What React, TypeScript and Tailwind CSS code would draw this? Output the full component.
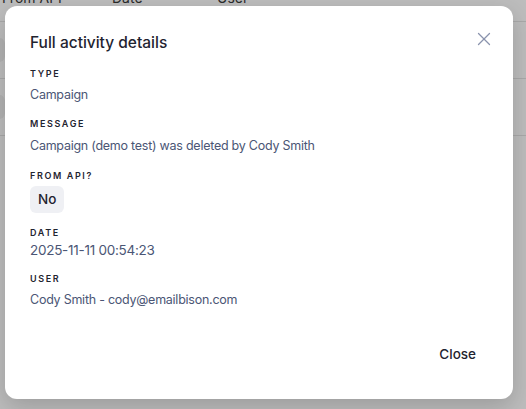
import React from "react";
import { X } from "lucide-react";

const Label: React.FC<{ children: React.ReactNode; className?: string }> = ({ children, className }) => (
  <div className={"text-[9px] leading-[12px] font-semibold tracking-[0.18em] uppercase text-[#1f2430] " + (className ?? "")}>
    {children}
  </div>
);

const Value: React.FC<{ children: React.ReactNode; className?: string }> = ({ children, className }) => (
  <div className={"text-[12.5px] leading-[18px] tracking-[-0.02em] text-[#4b5675] " + (className ?? "")}>{children}</div>
);

export default function App() {
  return (
    <div
      className="relative w-[526px] h-[409px] overflow-hidden bg-[#bdbdbd]"
      style={{ fontFamily: "Inter, 'Noto Sans', sans-serif" }}
    >
      {/* table behind the overlay */}
      <div className="absolute inset-0">
        <div className="flex h-[22px] items-end text-[14px] leading-5 text-[#2b2b2b] border-b border-[#a9a9a9] pb-[13px]">
          <span className="ml-[2px] w-[110px]">From API</span>
          <span className="w-[105px]">Date</span>
          <span>User</span>
        </div>
        <div className="h-[57px] border-b border-[#a9a9a9] relative">
          <div className="absolute left-[-20px] top-[16px] w-[25px] h-[24px] rounded-md bg-[#b3b3b3]" />
        </div>
        <div className="h-[57px] border-b border-[#a9a9a9] relative">
          <div className="absolute left-[-20px] top-[16px] w-[25px] h-[24px] rounded-md bg-[#b3b3b3]" />
        </div>
      </div>

      {/* modal */}
      <div className="absolute left-[5px] top-[6px] w-[508px] h-[393px] bg-white rounded-[12px] shadow-[0_8px_24px_rgba(0,0,0,0.18)] px-[25px] pt-[25px] flex flex-col">
        <button className="absolute right-[18px] top-[22px] text-[#8a93ad]">
          <X className="w-[22px] h-[22px]" strokeWidth={1.4} />
        </button>
        <h2 className="text-[15.5px] leading-6 font-medium text-[#1f2430]">Full activity details</h2>

        <Label className="mt-[13px]">Type</Label>
        <Value className="mt-[6px]">Campaign</Value>

        <Label className="mt-[14px]">Message</Label>
        <Value className="mt-[7px]">Campaign (demo test) was deleted by Cody Smith</Value>

        <Label className="mt-[15px]">From API?</Label>
        <div className="mt-[4px]">
          <span className="inline-flex items-center h-[27px] px-[8px] rounded-[6px] bg-[#eff0f4] text-[13.5px] font-medium text-[#1f2430]">
            No
          </span>
        </div>

        <Label className="mt-[14px]">Date</Label>
        <Value className="mt-[2px] text-[13.5px]">2025-11-11 00:54:23</Value>

        <Label className="mt-[14px]">User</Label>
        <Value className="mt-[6px]">Cody Smith - cody@emailbison.com</Value>

        <div className="flex justify-end mt-[27px] mr-[4px]">
          <button className="h-[36px] px-[8px] text-[13.5px] font-medium text-[#1f2430]">Close</button>
        </div>
      </div>
    </div>
  );
}
